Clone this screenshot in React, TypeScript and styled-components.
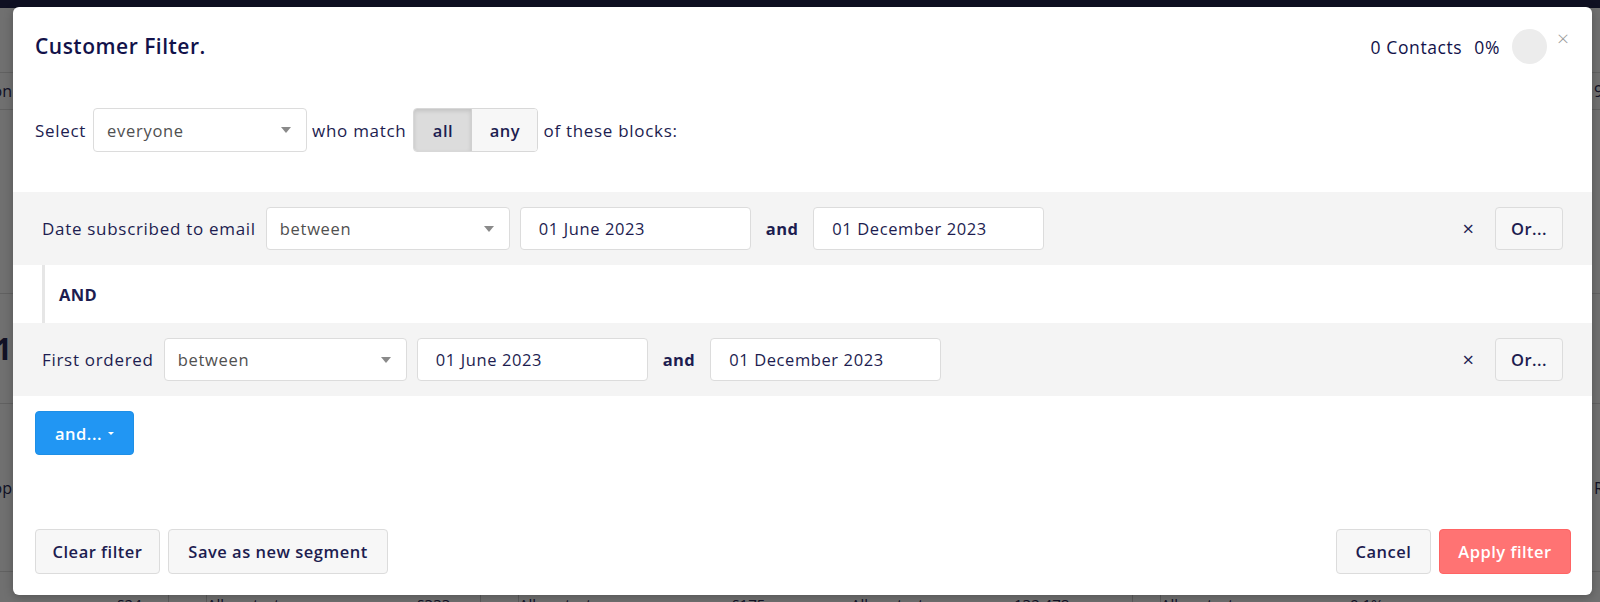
import React from "react";
import styled, { createGlobalStyle } from "styled-components";

const FONT = `"Open Sans", "Noto Sans", "DejaVu Sans", sans-serif`;
const NAVY = "#1d1d50";

const GlobalStyle = createGlobalStyle`
  html, body { margin: 0; padding: 0; }
  body { font-family: ${FONT}; color: ${NAVY}; background: #707070; overflow: hidden; }
  * { box-sizing: border-box; }
`;

/* ---------- backdrop page ---------- */
const Page = styled.div`
  position: relative;
  width: 1600px;
  height: 602px;
  overflow: hidden;
  background: #ffffff;
  display: flex;
  flex-direction: column;
`;

const Nav = styled.div`
  height: 8px;
  flex: none;
  background: #22264f;
`;

const BgRow = styled.div<{ $h: number; $line?: boolean }>`
  height: ${(p) => p.$h}px;
  flex: none;
  display: flex;
  align-items: center;
  justify-content: space-between;
  border-bottom: ${(p) => (p.$line ? "1px solid #dedede" : "none")};
  font-size: 16px;
  color: #2a2a55;
`;

const EdgeText = styled.span<{ $size?: number; $bold?: boolean }>`
  font-size: ${(p) => p.$size ?? 16}px;
  font-weight: ${(p) => (p.$bold ? 700 : 400)};
  white-space: nowrap;
`;

const LeftEdge = styled(EdgeText)`
  margin-left: -80px;
  width: 92px;
  text-align: right;
`;

const RightEdge = styled(EdgeText)`
  margin-right: -80px;
  width: 86px;
`;

const TableRow = styled.div`
  flex: none;
  display: grid;
  grid-template-columns: 116px 52px 38px 210px 64px 38px 213px 120px 163px 118px 28px 190px 1fr;
  align-items: start;
  padding-top: 0;
  font-size: 15px;
  color: #2a2a55;
`;

const Cell = styled.span<{ $sep?: boolean }>`
  white-space: nowrap;
  height: 24px;
  border-left: ${(p) => (p.$sep ? "1px solid #cfcfcf" : "none")};
`;

const Overlay = styled.div`
  position: absolute;
  inset: 0;
  background: rgba(0, 0, 0, 0.56);
`;

/* ---------- modal ---------- */
const Modal = styled.div`
  position: absolute;
  left: 13px;
  top: 7px;
  width: 1579px;
  height: 588px;
  background: #ffffff;
  border-radius: 6px;
  display: flex;
  flex-direction: column;
  box-shadow: 0 2px 10px rgba(0, 0, 0, 0.25);
`;

const Header = styled.div`
  display: flex;
  align-items: flex-start;
  justify-content: space-between;
  padding: 22px 23px 0 22px;
`;

const Title = styled.h1`
  margin: 5px 0 0 0;
  font-size: 21px;
  line-height: 24px;
  font-weight: 600;
  letter-spacing: 0.5px;
  color: #12124a;
`;

const Stats = styled.div`
  display: flex;
  align-items: center;
  font-size: 17.5px;
  font-weight: 500;
  letter-spacing: 0.6px;
  color: #12124a;
`;

const StatText = styled.span<{ $gap?: number }>`
  margin-left: ${(p) => p.$gap ?? 0}px;
  line-height: 24px;
`;

const Circle = styled.span`
  width: 35px;
  height: 35px;
  border-radius: 50%;
  background: #ececec;
  margin-left: 12px;
`;

const Close = styled.span`
  align-self: flex-start;
  margin: -1px 0 0 10px;
  font-size: 21px;
  line-height: 20px;
  color: #9a9a9a;
  font-weight: 300;
  letter-spacing: 0;
`;

const SelectRow = styled.div`
  display: flex;
  align-items: center;
  margin-top: 44px;
  padding: 0 22px;
  font-size: 17px;
  letter-spacing: 0.7px;
  color: ${NAVY};
`;

const Text = styled.span<{ $ml?: number; $mr?: number }>`
  margin-left: ${(p) => p.$ml ?? 0}px;
  margin-right: ${(p) => p.$mr ?? 0}px;
  white-space: nowrap;
`;

const SelectBox = styled.div<{ $w: number; $h: number }>`
  width: ${(p) => p.$w}px;
  height: ${(p) => p.$h}px;
  flex: none;
  display: flex;
  align-items: center;
  justify-content: space-between;
  padding: 0 15px 0 13px;
  background: #ffffff;
  border: 1px solid #dcdcdc;
  border-radius: 4px;
  font-size: 16.5px;
  letter-spacing: 0.7px;
  color: #505050;
`;

const Caret = styled.span<{ $color?: string; $size?: number }>`
  width: 0;
  height: 0;
  border-left: ${(p) => p.$size ?? 5}px solid transparent;
  border-right: ${(p) => p.$size ?? 5}px solid transparent;
  border-top: ${(p) => Math.round((p.$size ?? 5) * 1.1)}px solid ${(p) => p.$color ?? "#8a8a8a"};
`;

const Toggle = styled.div`
  display: flex;
  height: 44px;
  flex: none;
  border: 1px solid #d8d8d8;
  border-radius: 4px;
  overflow: hidden;
`;

const ToggleBtn = styled.button<{ $active?: boolean; $w: number }>`
  width: ${(p) => p.$w}px;
  height: 100%;
  border: none;
  border-left: ${(p) => (p.$active ? "none" : "1px solid #d0d0d0")};
  background: ${(p) => (p.$active ? "#dcdcdc" : "#f7f7f7")};
  box-shadow: ${(p) => (p.$active ? "inset 0 2px 4px rgba(0,0,0,0.12)" : "none")};
  font-family: ${FONT};
  font-size: 16.5px;
  font-weight: 600;
  letter-spacing: 0.5px;
  color: ${NAVY};
  padding: 0;
`;

const Blocks = styled.div`
  margin-top: 40px;
  display: flex;
  flex-direction: column;
`;

const Block = styled.div`
  height: 73px;
  display: flex;
  align-items: center;
  padding: 0 29px;
  background: #f4f4f4;
  font-size: 17px;
  letter-spacing: 0.7px;
  color: ${NAVY};
`;

const DateInput = styled.input`
  width: 231px;
  height: 43px;
  flex: none;
  padding: 0 0 0 18px;
  border: 1px solid #dcdcdc;
  border-radius: 4px;
  background: #ffffff;
  font-family: ${FONT};
  font-size: 16.5px;
  letter-spacing: 0.6px;
  color: ${NAVY};
  outline: none;
`;

const AndWord = styled.span`
  margin: 0 15px;
  font-weight: 700;
  font-size: 16.5px;
  letter-spacing: 0.4px;
`;

const Spacer = styled.div`
  flex: 1;
`;

const Remove = styled.span`
  margin-right: 21px;
  font-size: 20px;
  line-height: 20px;
  letter-spacing: 0;
  color: ${NAVY};
`;

const Button = styled.button<{ $w: number; $h?: number; $variant?: "default" | "primary" | "danger" }>`
  width: ${(p) => p.$w}px;
  height: ${(p) => p.$h ?? 45}px;
  flex: none;
  display: inline-flex;
  align-items: center;
  justify-content: center;
  gap: 6px;
  padding: 0;
  border-radius: 4px;
  font-family: ${FONT};
  font-size: 16.5px;
  font-weight: 600;
  letter-spacing: 0.5px;
  cursor: pointer;
  border: 1px solid
    ${(p) => (p.$variant === "primary" ? "#1e8fe6" : p.$variant === "danger" ? "#ff6464" : "#dcdcdc")};
  background: ${(p) => (p.$variant === "primary" ? "#2196f3" : p.$variant === "danger" ? "#ff7373" : "#f7f7f7")};
  color: ${(p) => (p.$variant === "primary" || p.$variant === "danger" ? "#ffffff" : NAVY)};
`;

const Connector = styled.div`
  height: 58px;
  margin-left: 29px;
  display: flex;
  align-items: center;
  padding-left: 14px;
  border-left: 3px solid #e6e6e6;
  font-size: 16.5px;
  font-weight: 700;
  letter-spacing: 0.4px;
  color: ${NAVY};
`;

const AddRow = styled.div`
  margin-top: 15px;
  padding: 0 22px;
`;

const Footer = styled.div`
  margin-top: auto;
  padding: 0 21px 21px 22px;
  display: flex;
  justify-content: space-between;
`;

const Group = styled.div`
  display: flex;
  gap: 8px;
`;

type Rule = { label: string; selectW: number };

const rules: Rule[] = [
  { label: "Date subscribed to email", selectW: 244 },
  { label: "First ordered", selectW: 243 },
];

function RuleBlock({ rule }: { rule: Rule }) {
  return (
    <Block>
      <Text $mr={10}>{rule.label}</Text>
      <SelectBox $w={rule.selectW} $h={43}>
        <span>between</span>
        <Caret />
      </SelectBox>
      <Text $ml={10} />
      <DateInput readOnly value="01 June 2023" />
      <AndWord>and</AndWord>
      <DateInput readOnly value="01 December 2023" />
      <Spacer />
      <Remove>×</Remove>
      <Button $w={68} $h={43}>Or...</Button>
    </Block>
  );
}

export default function App() {
  return (
    <>
      <GlobalStyle />
      <Page>
        <Nav />
        <BgRow $h={65} $line />
        <BgRow $h={37} $line>
          <LeftEdge>Conversion</LeftEdge>
          <RightEdge>9,204</RightEdge>
        </BgRow>
        <BgRow $h={184} $line />
        <BgRow $h={110} $line>
          <LeftEdge $size={30} $bold>
            41
          </LeftEdge>
          <RightEdge />
        </BgRow>
        <BgRow $h={168} $line>
          <LeftEdge>Top</LeftEdge>
          <RightEdge>Rec</RightEdge>
        </BgRow>
        <BgRow $h={22} />
        <TableRow>
          <Cell />
          <Cell>£24</Cell>
          <Cell $sep />
          <Cell $sep>All contacts</Cell>
          <Cell>£333</Cell>
          <Cell $sep />
          <Cell $sep>All contacts</Cell>
          <Cell>£175</Cell>
          <Cell>All contacts</Cell>
          <Cell>132,478</Cell>
          <Cell $sep />
          <Cell $sep>All contacts</Cell>
          <Cell>0.1%</Cell>
        </TableRow>
        <Overlay />
        <Modal>
          <Header>
            <Title>Customer Filter.</Title>
            <Stats>
              <StatText>0 Contacts</StatText>
              <StatText $gap={12}>0%</StatText>
              <Circle />
              <Close>×</Close>
            </Stats>
          </Header>

          <SelectRow>
            <Text $mr={7}>Select</Text>
            <SelectBox $w={214} $h={44}>
              <span>everyone</span>
              <Caret />
            </SelectBox>
            <Text $ml={5} $mr={7}>
              who match
            </Text>
            <Toggle>
              <ToggleBtn $active $w={57}>
                all
              </ToggleBtn>
              <ToggleBtn $w={66}>any</ToggleBtn>
            </Toggle>
            <Text $ml={5}>of these blocks:</Text>
          </SelectRow>

          <Blocks>
            <RuleBlock rule={rules[0]} />
            <Connector>AND</Connector>
            <RuleBlock rule={rules[1]} />
          </Blocks>

          <AddRow>
            <Button $w={99} $h={44} $variant="primary">
              and...
              <Caret $color="#ffffff" $size={3} />
            </Button>
          </AddRow>

          <Footer>
            <Group>
              <Button $w={125}>Clear filter</Button>
              <Button $w={220}>Save as new segment</Button>
            </Group>
            <Group>
              <Button $w={95}>Cancel</Button>
              <Button $w={132} $variant="danger">
                Apply filter
              </Button>
            </Group>
          </Footer>
        </Modal>
      </Page>
    </>
  );
}
